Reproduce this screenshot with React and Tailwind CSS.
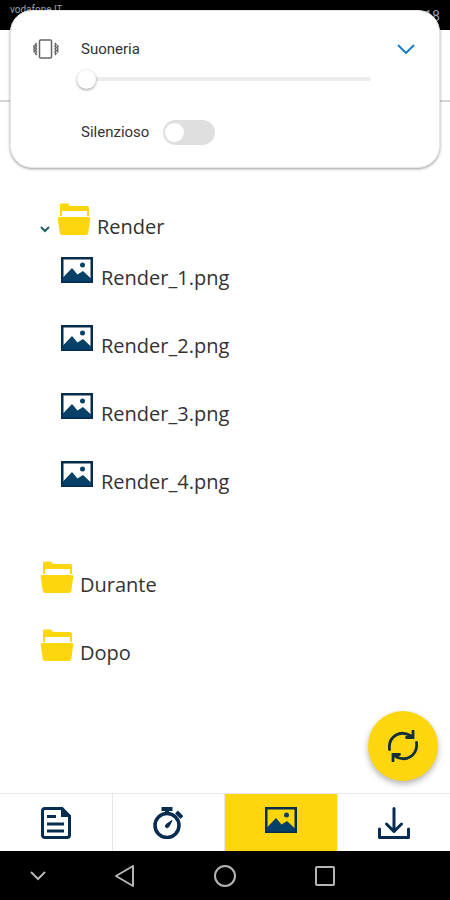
import { useState } from "react";

const NAVY = "#062c50";

const FolderIcon = () => (
  <svg viewBox="0 0 34 33" className="h-[33px] w-[34px] shrink-0" fill="#fdd60d" aria-hidden="true">
    <path d="M3 2q0-1.500 1.500-1.500H11l2 2.500h17q2 0 2 2v8h-2V8H5v5H3z" />
    <path d="M2 14h30q1.500 0 1.300 1.500l-2 14.500q-.3 2-2.300 2H5q-2 0-2.300-2l-2-14.500Q.5 14 2 14z" />
  </svg>
);

const PictureIcon = () => (
  <svg viewBox="0 0 32 26" className="h-[26px] w-8 shrink-0" fill="none" aria-hidden="true">
    <rect x="1.250" y="1.250" width="29.500" height="23.500" stroke={NAVY} strokeWidth="2.500" />
    <path d="M2 24.500v-4L11 11l5.500 6.500L22 14l8 7.500v3z" fill="#074168" />
    <circle cx="21.500" cy="8" r="2.500" fill="#074168" />
  </svg>
);

const DocumentIcon = () => (
  <svg viewBox="0 0 30 32" className="h-8 w-[30px]" fill="none" stroke={NAVY} strokeWidth="3" aria-hidden="true">
    <path d="M4 1.500h17L28.500 9v19q0 2.500-2.500 2.500H4Q1.500 30.500 1.500 28V4Q1.500 1.500 4 1.500z" />
    <path d="M21.500 2.500V8.500h6z" fill={NAVY} />
    <path d="M6 9.500h9M6 17h17M6 24h17" />
  </svg>
);

const StopwatchIcon = () => (
  <svg viewBox="0 0 30 32" className="h-8 w-[30px]" fill="none" stroke={NAVY} aria-hidden="true">
    <circle cx="14" cy="18.500" r="12" strokeWidth="3.500" />
    <path d="M8.500 2h11" strokeWidth="4" />
    <path d="M14 2v5M23.500 5l5.500 5.500" strokeWidth="4" />
    <path d="M19 13.500l-3 6q-1.500 2-3 1t0-3z" fill={NAVY} />
  </svg>
);

const DownloadIcon = () => (
  <svg viewBox="0 0 32 32" className="size-8" fill="none" stroke={NAVY} strokeWidth="3" strokeLinecap="round" strokeLinejoin="round" aria-hidden="true">
    <path d="M16 1.500V24M8.500 17l7.500 7.500 7.500-7.500M1.500 22v8.500h29V22" />
  </svg>
);

const RefreshIcon = () => (
  <svg viewBox="0 0 30 32" className="h-8 w-[30px]" fill="none" stroke="#12303c" strokeWidth="2.800" strokeLinecap="round" aria-hidden="true">
    <path d="M1.500 19.500C0 7 12-1.500 24 6.500M25 1v6.500h-6.500" />
    <path d="M28.500 12.500C30 25 18 33.500 6 25.500M5 31v-6.500h6.500" />
  </svg>
);

const VibrateIcon = () => (
  <svg viewBox="0 0 26 20" className="h-5 w-[26px]" fill="none" stroke="#666" strokeWidth="1.500" aria-hidden="true">
    <rect x="6.500" y="1" width="12" height="18" rx="1" />
    <path d="M3.500 4L2.500 5.500l1 1.500-1 1.500 1 1.500-1 1.500 1 1.500-1 1.500 1 1.500M1.500 6L.8 7.500l.7 1.500-.7 1.500.7 1.500-.7 1.500" />
    <path d="M22 4l1 1.500L22 7l1 1.500-1 1.500 1 1.500-1 1.500 1 1.500-1 1.500M24.300 6l.7 1.500-.7 1.500.7 1.500-.7 1.500.7 1.500" />
  </svg>
);

const renders = ["Render_1.png", "Render_2.png", "Render_3.png", "Render_4.png"];
const folders = ["Durante", "Dopo"];

const tabs = [
  { id: "documents", label: "Documenti", Icon: DocumentIcon },
  { id: "timer", label: "Timer", Icon: StopwatchIcon },
  { id: "pictures", label: "Immagini", Icon: PictureIcon },
  { id: "download", label: "Scarica", Icon: DownloadIcon },
];

const VolumePanel = () => {
  const [volume, setVolume] = useState(0);
  const [silent, setSilent] = useState(false);

  return (
    <section className="absolute inset-x-[10px] top-[10px] z-10 flex gap-[22px] rounded-[22px] border border-gray-200 bg-white pt-7 pr-6 pb-[22px] pl-[22px] font-[Roboto,sans-serif] text-[15px] text-[#333] shadow-[0_1px_3px_rgba(0,0,0,0.4)]">
      <VibrateIcon />
      <div className="flex-1">
        <div className="flex h-5 items-center justify-between">
          <label htmlFor="volume">Suoneria</label>
          <button type="button" aria-label="Chiudi" className="text-[#1b7cc8]">
            <svg viewBox="0 0 18 10" className="h-[10px] w-[18px]" fill="none" stroke="currentColor" strokeWidth="2" aria-hidden="true">
              <path d="M1 1l8 8 8-8" />
            </svg>
          </button>
        </div>
        <div className="mr-11 -ml-1 flex h-10 items-center">
          <input
            id="volume"
            type="range"
            value={volume}
            onChange={(e) => setVolume(e.target.value)}
            className="h-1 w-full appearance-none rounded bg-[#ececec] [&::-webkit-slider-thumb]:size-[19px] [&::-webkit-slider-thumb]:appearance-none [&::-webkit-slider-thumb]:rounded-full [&::-webkit-slider-thumb]:bg-white [&::-webkit-slider-thumb]:shadow-[0_1px_3px_rgba(0,0,0,0.4)]"
          />
        </div>
        <label className="mt-[21px] flex items-center gap-[14px]">
          Silenzioso
          <input
            type="checkbox"
            checked={silent}
            onChange={(e) => setSilent(e.target.checked)}
            className="relative h-[25px] w-[52px] appearance-none rounded-full bg-[#dfdfdf] before:absolute before:top-[3px] before:left-[2px] before:size-[19px] before:rounded-full before:bg-white checked:bg-[#1b7cc8] checked:before:left-[31px]"
          />
        </label>
      </div>
    </section>
  );
};

const FileTree = () => (
  <main className="flex-1 pt-[33px] pl-10 text-xl text-[#333]">
    <div className="flex h-[68px] pl-[17px]">
      <FolderIcon />
    </div>
    <button type="button" aria-expanded="true" className="flex h-[54px] items-start">
      <svg viewBox="0 0 10 7" className="mt-[23px] mr-[7px] h-[7px] w-[10px]" fill="none" stroke="#245f60" strokeWidth="2" aria-hidden="true">
        <path d="M1 1l4 4 4-4" />
      </svg>
      <FolderIcon />
      <span className="mt-[10px] ml-[6px]">Render</span>
    </button>
    <ul className="pl-[21px]">
      {renders.map((name) => (
        <li key={name} className="flex h-[68px] items-start">
          <PictureIcon />
          <a href={`#${name}`} className="mt-[7px] ml-2">{name}</a>
        </li>
      ))}
    </ul>
    <div className="mt-8">
      {folders.map((name) => (
        <button key={name} type="button" className="flex h-[68px] w-full items-start">
          <FolderIcon />
          <span className="mt-[10px] ml-[6px]">{name}</span>
        </button>
      ))}
    </div>
  </main>
);

export default function App() {
  const [active, setActive] = useState("pictures");

  return (
    <div className="relative flex min-h-screen flex-col bg-white font-['Open_Sans',sans-serif]">
      <div className="flex h-[30px] justify-between bg-black px-[10px] font-[Roboto,sans-serif] text-gray-400">
        <span className="text-[10px] leading-5">vodafone IT</span>
        <span className="pt-[6px] text-sm">18</span>
      </div>
      <header className="h-[72px] border-b-2 border-[#d5d5d5]" />
      <VolumePanel />
      <FileTree />

      <footer className="sticky bottom-0">
        <button
          type="button"
          aria-label="Aggiorna"
          className="absolute right-3 bottom-full mb-3 flex size-[70px] items-center justify-center rounded-full bg-[#fdd60d] shadow-[0_3px_6px_rgba(0,0,0,0.3)]"
        >
          <RefreshIcon />
        </button>
        <nav className="grid h-[58px] grid-cols-4 divide-x divide-gray-200 border-t border-gray-200 bg-white">
          {tabs.map(({ id, label, Icon }) => (
            <button
              key={id}
              type="button"
              aria-label={label}
              onClick={() => setActive(id)}
              className={`flex justify-center pt-[13px] ${active === id ? "bg-[#fdd60d]" : ""}`}
            >
              <Icon />
            </button>
          ))}
        </nav>
        <div className="flex h-[49px] items-center bg-black pl-[30px] text-[#b5b5b5]">
          <svg viewBox="0 0 16 10" className="h-[10px] w-4" fill="none" stroke="currentColor" strokeWidth="2" aria-hidden="true">
            <path d="M1 1l7 7 7-7" />
          </svg>
          <div className="ml-[69px] flex w-[220px] items-center justify-between">
            <svg viewBox="0 0 20 22" className="h-[22px] w-5" fill="none" stroke="currentColor" strokeWidth="2" strokeLinejoin="round" aria-hidden="true">
              <path d="M18 1v20L1 11z" />
            </svg>
            <svg viewBox="0 0 22 22" className="size-[22px]" fill="none" stroke="currentColor" strokeWidth="2" aria-hidden="true">
              <circle cx="11" cy="11" r="10" />
            </svg>
            <svg viewBox="0 0 20 20" className="size-5" fill="none" stroke="currentColor" strokeWidth="2" aria-hidden="true">
              <rect x="1" y="1" width="18" height="18" rx="1" />
            </svg>
          </div>
        </div>
      </footer>
    </div>
  );
}
